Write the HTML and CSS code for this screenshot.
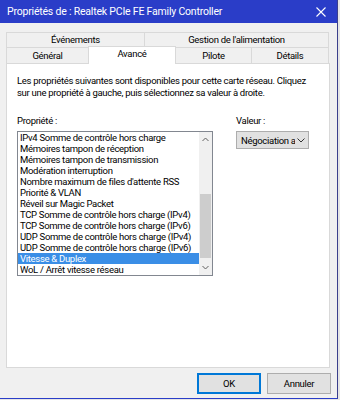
FILE: index.html
```html
<!DOCTYPE html>
<html lang="fr">
<head>
    <meta charset="UTF-8">
    <title>Propriétés de : Realtek PCIe FE Family Controller</title>
    <link rel="stylesheet" href="styles.css">
</head>
<body>
    <div class="window">
        <div class="titlebar">
            <span class="title">Propriétés de : Realtek PCIe FE Family Controller</span>
            <svg class="close" width="10" height="10" viewBox="0 0 10 10">
                <path d="M0.5 0.5 L9.5 9.5 M9.5 0.5 L0.5 9.5" stroke="#fff" stroke-width="1.1" fill="none"/>
            </svg>
        </div>

        <div class="tabs">
            <div class="tab-row">
                <div class="tab tab-events">Événements</div>
                <div class="tab tab-power">Gestion de l'alimentation</div>
            </div>
            <div class="tab-row">
                <div class="tab tab-general">Général</div>
                <div class="tab tab-advanced active">Avancé</div>
                <div class="tab tab-driver">Pilote</div>
                <div class="tab tab-details">Détails</div>
            </div>
        </div>

        <div class="panel">
            <p class="intro">Les propriétés suivantes sont disponibles pour cette carte réseau. Cliquez sur une propriété à gauche, puis sélectionnez sa valeur à droite.</p>

            <div class="fields">
                <div class="prop-col">
                    <div class="label">Propriété :</div>
                    <div class="listbox">
                        <ul class="items">
                            <li>IPv4 Somme de contrôle hors charge</li>
                            <li>Mémoires tampon de réception</li>
                            <li>Mémoires tampon de transmission</li>
                            <li>Modération interruption</li>
                            <li>Nombre maximum de files d'attente RSS</li>
                            <li>Priorité &amp; VLAN</li>
                            <li>Réveil sur Magic Packet</li>
                            <li>TCP Somme de contrôle hors charge (IPv4)</li>
                            <li>TCP Somme de contrôle hors charge (IPv6)</li>
                            <li>UDP Somme de contrôle hors charge (IPv4)</li>
                            <li>UDP Somme de contrôle hors charge (IPv6)</li>
                            <li class="selected">Vitesse &amp; Duplex</li>
                            <li>WoL / Arrêt vitesse réseau</li>
                        </ul>
                        <div class="scrollbar">
                            <svg class="arrow" width="7" height="5" viewBox="0 0 7 5">
                                <path d="M0.5 4 L3.5 1 L6.5 4" stroke="#606060" stroke-width="1" fill="none"/>
                            </svg>
                            <div class="track">
                                <div class="thumb"></div>
                            </div>
                            <svg class="arrow" width="7" height="5" viewBox="0 0 7 5">
                                <path d="M0.5 1 L3.5 4 L6.5 1" stroke="#606060" stroke-width="1" fill="none"/>
                            </svg>
                        </div>
                    </div>
                </div>
                <div class="value-col">
                    <div class="label">Valeur :</div>
                    <div class="combo">
                        <span class="combo-text">Négociation automatique</span>
                        <svg width="8" height="5" viewBox="0 0 8 5">
                            <path d="M0.5 0.5 L4 4 L7.5 0.5" stroke="#333" stroke-width="1" fill="none"/>
                        </svg>
                    </div>
                </div>
            </div>
        </div>

        <div class="buttons">
            <button class="btn default">OK</button>
            <button class="btn">Annuler</button>
        </div>
    </div>
</body>
</html>
```

FILE: styles.css
```css
html, body {
    margin: 0;
    padding: 0;
    background-color: #e6e6e6;
}
body {
    font-family: Roboto, "Liberation Sans", sans-serif;
    font-size: 9.5px;
    letter-spacing: -0.3px;
    color: #000;
}
.window {
    width: 337px;
    height: 398px;
    background-color: #f0f0f0;
    border-right: 1px solid #3b3f8c;
    border-bottom: 1px solid #2a3dc8;
    overflow: hidden;
}
.titlebar {
    height: 23px;
    background-color: #2a3dc8;
    color: #fff;
    display: flex;
    align-items: center;
    padding: 0 10px 0 7px;
    font-size: 10.5px;
    letter-spacing: -0.2px;
}
.title {
    flex: 1;
}
.close {
    margin-right: 1px;
}
.tabs {
    margin: 9px 0 0 6px;
    width: 322px;
}
.tab-row {
    display: flex;
    align-items: flex-end;
}
.tab {
    box-sizing: border-box;
    height: 16px;
    border: 1px solid #d9d9d9;
    border-bottom: none;
    margin-right: -1px;
    text-align: center;
    line-height: 15px;
    background-color: #f0f0f0;
}
.tab-row:first-child .tab {
    height: 15px;
    line-height: 14px;
}
.tab-events { width: 139px; }
.tab-power { width: 185px; }
.tab-general { width: 83px; }
.tab-advanced { width: 88px; }
.tab-driver { width: 77px; }
.tab-details { width: 78px; }
.tab.active {
    background-color: #fff;
    height: 18px;
    margin-top: -2px;
    line-height: 14px;
    position: relative;
    z-index: 1;
    margin-bottom: -1px;
}
.panel {
    box-sizing: border-box;
    margin-left: 6px;
    width: 324px;
    height: 305px;
    background-color: #fff;
    border: 1px solid #d9d9d9;
    padding: 11px 10px 0 10px;
}
.intro {
    margin: 0;
    line-height: 12px;
}
.fields {
    display: flex;
    margin-top: 16px;
}
.label {
    line-height: 12px;
    height: 12px;
}
.prop-col {
    width: 196px;
}
.value-col {
    margin-left: 23px;
}
.listbox {
    margin-top: 4px;
    display: flex;
    height: 145px;
    box-sizing: border-box;
    border: 1px solid #828790;
}
.items {
    list-style: none;
    margin: 0;
    padding: 0;
    flex: 1;
    overflow: hidden;
}
.items li {
    height: 11px;
    line-height: 11px;
    padding-left: 2px;
    white-space: nowrap;
}
.items li.selected {
    background-color: #3a8ee6;
    color: #fff;
}
.scrollbar {
    width: 13px;
    background-color: #f0f0f0;
    display: flex;
    flex-direction: column;
    align-items: center;
}
.arrow {
    margin: 5px 0;
}
.track {
    flex: 1;
    width: 100%;
    display: flex;
    flex-direction: column;
    justify-content: flex-end;
}
.thumb {
    height: 64px;
    margin: 0 1px 2px;
    background-color: #cdcdcd;
}
.combo {
    margin-top: 4px;
    box-sizing: border-box;
    width: 73px;
    height: 18px;
    background-color: #e1e1e1;
    border: 1px solid #adadad;
    display: flex;
    align-items: center;
    padding: 0 3px 0 4px;
}
.combo-text {
    flex: 1;
    overflow: hidden;
    white-space: nowrap;
}
.combo svg {
    margin-left: 2px;
}
.buttons {
    display: flex;
    justify-content: flex-end;
    gap: 6px;
    margin: 5px 6px 0 0;
}
.btn {
    box-sizing: border-box;
    width: 64px;
    height: 21px;
    padding: 0;
    font-family: Roboto, "Liberation Sans", sans-serif;
    font-size: 9.5px;
    letter-spacing: -0.3px;
    color: #000;
    background-color: #e1e1e1;
    border: 1px solid #adadad;
}
.btn.default {
    border: 2px solid #0078d7;
}
```
